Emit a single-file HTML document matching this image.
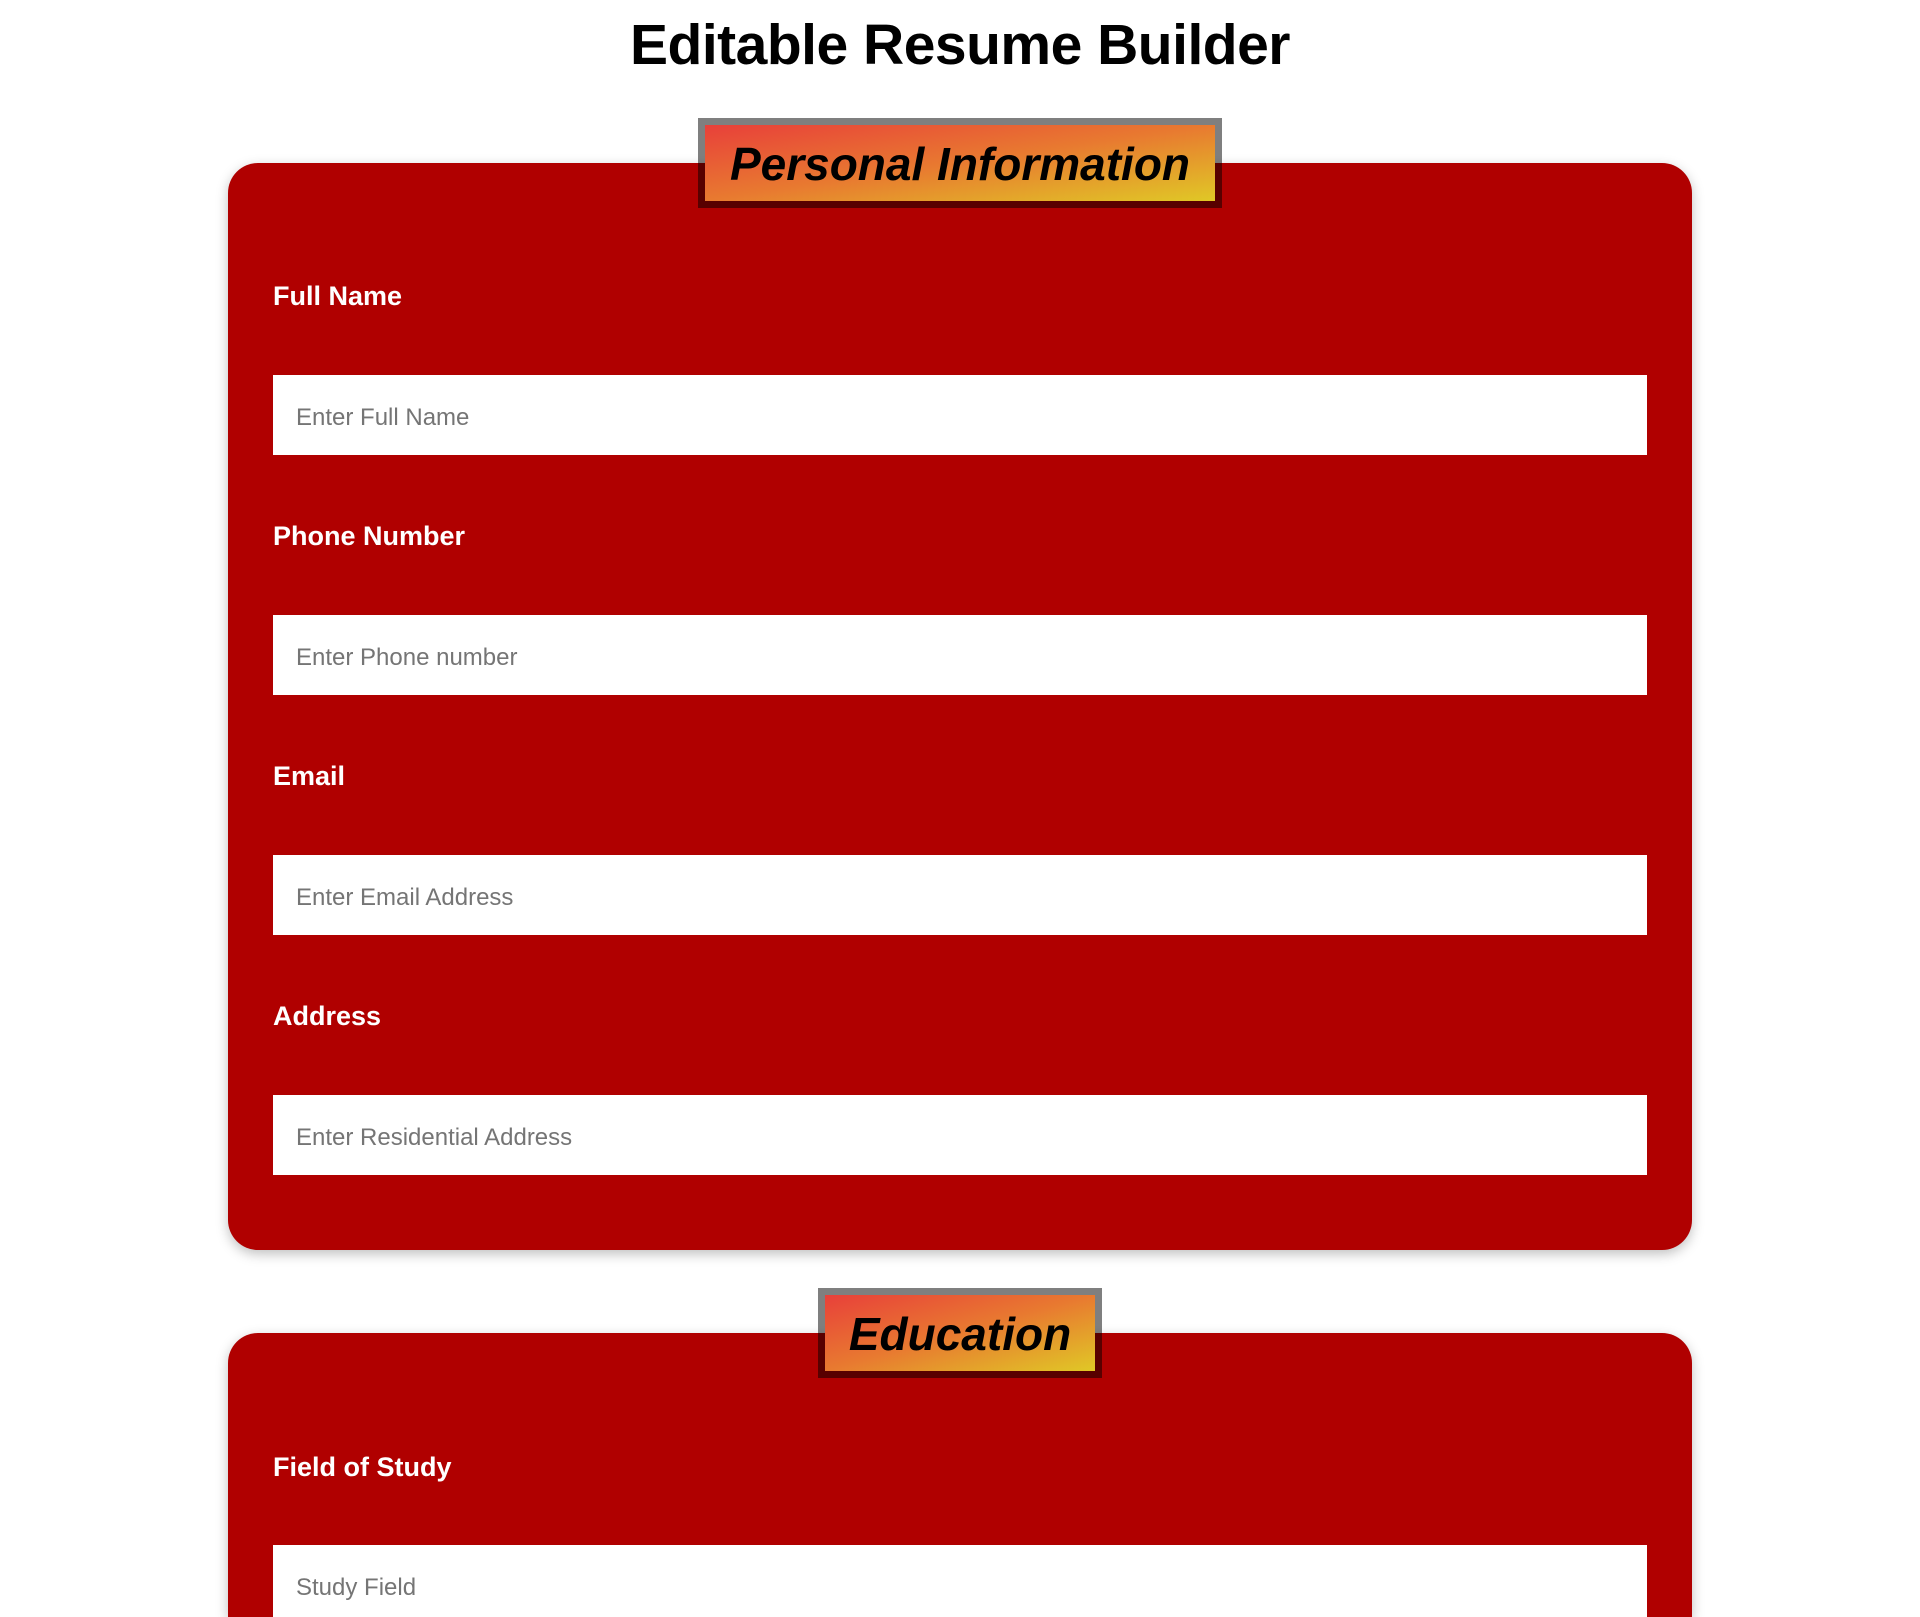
<!DOCTYPE html>
<html><head><meta charset="utf-8"><style>
html,body{margin:0;padding:0;background:#fff;width:1920px;height:1617px;overflow:hidden;position:relative;font-family:"Segoe UI","Liberation Sans",sans-serif}
h1{position:absolute;left:0;width:1920px;top:12px;margin:0;text-align:center;font-size:57px;font-weight:bold;color:#000;letter-spacing:-0.5px}
.card{position:absolute;left:228px;width:1464px;background:#b00000;border-radius:30px;box-shadow:0 4px 12px rgba(0,0,0,.25)}
.badge{position:absolute;border:7px solid rgba(0,0,0,.5);background:linear-gradient(to bottom right,#e8403a,#e87a30,#e0c826);background-clip:padding-box;font-style:italic;font-weight:bold;color:#000;text-align:center;box-sizing:border-box;z-index:2}
.lbl{position:absolute;left:273px;color:#fff;font-weight:bold;font-size:27px;line-height:30px}
.inp{position:absolute;left:273px;width:1374px;height:80px;background:#fff;color:#757575;font-size:24px;line-height:86px;padding-left:23px;box-sizing:border-box}
</style></head><body>
<h1>Editable Resume Builder</h1>
<div class="card" style="top:163px;height:1087px"></div>
<div class="badge" style="left:698px;top:118px;width:524px;height:90px;font-size:46px;line-height:78px">Personal Information</div>
<div class="lbl" style="top:281px">Full Name</div>
<div class="inp" style="top:375px">Enter Full Name</div>
<div class="lbl" style="top:521px">Phone Number</div>
<div class="inp" style="top:615px">Enter Phone number</div>
<div class="lbl" style="top:761px">Email</div>
<div class="inp" style="top:855px">Enter Email Address</div>
<div class="lbl" style="top:1001px">Address</div>
<div class="inp" style="top:1095px">Enter Residential Address</div>
<div class="card" style="top:1333px;height:284px;border-bottom-left-radius:0;border-bottom-right-radius:0"></div>
<div class="badge" style="left:818px;top:1288px;width:284px;height:90px;font-size:46px;line-height:78px">Education</div>
<div class="lbl" style="top:1452px">Field of Study</div>
<div class="inp" style="top:1545px;height:72px">Study Field</div>
</body></html>
